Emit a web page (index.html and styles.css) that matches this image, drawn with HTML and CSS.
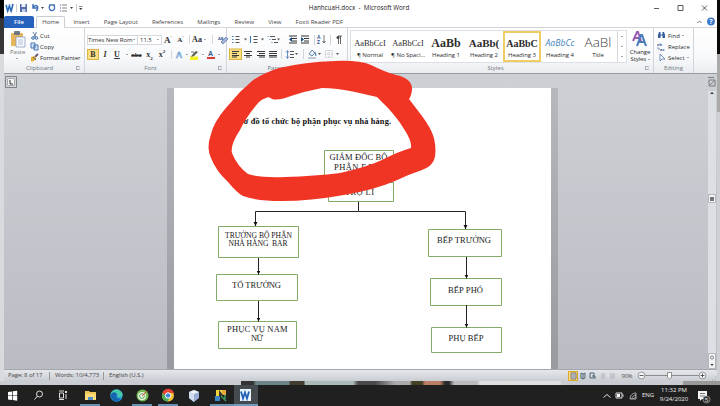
FILE: index.html
```html
<!DOCTYPE html>
<html lang="en">
<head>
<meta charset="utf-8">
<title>HanhcuaH.docx - Microsoft Word</title>
<link rel="stylesheet" href="styles.css">
</head>
<body>
<div class="screen">
<div class="desktop">
<div class="edge"></div>
<main class="window">
  <header class="titlebar">
    <svg class="quick" width="82" height="16" viewBox="4 0 82 16">
      <rect x="6" y="4" width="7" height="8" fill="#dcebfa"/><path d="M6 5l1.700 6 1.700-5 1.700 5 2-7" fill="none" stroke="#2868b8" stroke-width="1.500"/>
      <path d="M16.500 4v8M76.500 4v8" stroke="#aaa" stroke-width=".6"/>
      <rect x="20" y="4" width="7" height="8" fill="#536dab"/><rect x="21.500" y="4" width="4" height="3" fill="#edf2fb"/><rect x="22" y="9" width="3.500" height="3" fill="#c6d0e8"/>
      <path d="M33 4v4h4M33.500 7.500c2-4 6-1.500 3 3.500" fill="none" stroke="#4270b5" stroke-width="1.500"/>
      <path d="M41 7h3l-1.500 2zM70 7h3l-1.500 2zM79 8h3.500l-1.700 2z" fill="#444"/><path d="M79 6.500h3.500" stroke="#555" stroke-width=".7"/>
      <path d="M50 5c-2 3 0 6 2.500 5.500s3-4 .5-5.500h2M49 5h3" fill="none" stroke="#4878bb" stroke-width="1.400"/>
      <path d="M62 5h5M62 8h5M62 11h5" stroke="#666" stroke-width=".8"/><path d="M60 5h1M60 8h1M60 11h1" stroke="#345b95" stroke-width="1.200"/>
    </svg>
    <div class="title">HanhcuaH.docx&nbsp; -&nbsp; Microsoft Word</div>
    <svg class="controls" width="67" height="16" viewBox="650 0 67 16"><path d="M654 8.500h5M678 5.500h5v5h-5zM702 5.500l5 5M707 5.500l-5 5" fill="none" stroke="#333" stroke-width=".8"/></svg>
  </header>
  <nav class="tabs">
    <span class="file">File</span><span class="home">Home</span><span>Insert</span><span>Page Layout</span><span>References</span><span>Mailings</span><span>Review</span><span>View</span><span>Foxit Reader PDF</span>
    <svg class="help" width="22" height="12" viewBox="695 16 22 12"><path d="M697.500 23l2-2 2 2" fill="none" stroke="#777"/><circle cx="711" cy="21.500" r="3.900" fill="#3c78c9"/><text x="711" y="24" text-anchor="middle" class="q">?</text></svg>
  </nav>
  <section class="ribbon">
    <div class="group clipboard">
      <div class="body">
        <div class="paste"><svg width="16" height="19" viewBox="0 0 16 19"><rect x="1" y="3" width="12" height="13" rx="1" fill="#e7b65c"/><rect x="4" y="1" width="6" height="4" rx="1" fill="#717782"/><path d="M6 7h9v10H6z" fill="#f5f8fc" stroke="#8297b5" stroke-width=".7"/><path d="M8 10h5M8 12h5M8 14h5" stroke="#91a3bd" stroke-width=".6"/></svg><span>Paste</span><i class="arrow"></i></div>
        <div class="commands">
          <div><svg width="9" height="9" viewBox="0 0 9 9"><path d="M3 1l3 5M6.500 1L4 6" stroke="#6b7f9e" fill="none"/><circle cx="3" cy="7" r="1.300" fill="none" stroke="#376eb0"/><circle cx="6.500" cy="7" r="1.300" fill="none" stroke="#376eb0"/></svg>Cut</div>
          <div><svg width="9" height="9" viewBox="0 0 9 9"><path d="M1 1h4v5H1zM4 3h4v5H4z" fill="#d5e5fa" stroke="#4976b4"/></svg>Copy</div>
          <div><svg width="9" height="9" viewBox="0 0 9 9"><path d="M5 4l3-3" stroke="#665a7d" stroke-width="2"/><path d="M1 4l4-1 1 3-2 2-3 .5z" fill="#e7af32"/><path d="M3 4l3 3" stroke="#4b5d80"/></svg><span class="painter">Format Painter</span></div>
        </div>
      </div>
      <div class="label">Clipboard<i class="launch"></i></div>
    </div>
    <div class="group font">
      <div class="body">
        <div class="fontrow top">
          <div class="combo"><span>Times New Rom</span><i class="arrow"></i></div><div class="combo size"><span>11.5</span><i class="arrow"></i></div>
          <b class="serif grow">A<sup>ˆ</sup></b><b class="serif shrink">A<sup>ˇ</sup></b><i class="sep"></i><b class="serif aa">Aa</b><i class="arrow"></i><i class="sep"></i>
          <svg width="11" height="10" viewBox="0 0 11 10"><text x="0" y="5" class="mini">AB</text><path d="M3 7l5-5 2 2-5 5z" fill="#a3b5df" stroke="#53719f" stroke-width=".7"/></svg>
        </div>
        <div class="fontrow bottom">
          <b class="serif bold">B</b><b class="serif"><em>I</em></b><b class="serif"><u>U</u></b><i class="arrow"></i><s>abc</s><b class="serif">x<sub>2</sub></b><b class="serif">x<sup>2</sup></b><i class="sep"></i>
          <span class="effect">A</span><i class="arrow"></i>
          <svg width="9" height="10" viewBox="0 0 9 10"><path d="M0 6.500h8V10H0z" fill="#f4ef23"/><path d="M2 5l4-4 2 1-4 4-3 1z" fill="#596347"/><path d="M1 2h3v2" stroke="#777" fill="none"/></svg><i class="arrow"></i><span class="ink">A</span><i class="arrow"></i>
        </div>
      </div>
      <div class="label">Font<i class="launch"></i></div>
    </div>
    <div class="group paragraph">
      <div class="body">
        <svg width="119" height="34" viewBox="229 29 119 34">
          <g stroke="#555" stroke-width="1"><path d="M235.500 36.500h4M235.500 39.500h4M235.500 42.500h4M253.500 36.500h4M253.500 39.500h4M253.500 42.500h4M270 36.500h5M272 39.500h4M274 42.500h4"/><path d="M232 36.500h1.500M232 39.500h1.500M232 42.500h1.500M250.500 36v7M267.500 36.500h1M269.500 39.500h1M271.500 42.500h1" stroke="#3976bb"/></g>
          <path d="M244 38.500h3l-1.500 2zM261 38.500h3l-1.500 2zM277 38.500h3l-1.500 2zM295 53h3l-1.500 2zM318 53h3l-1.500 2zM336 53h3l-1.500 2z" fill="#555"/>
          <path d="M289 36h8M292 38.500h5M292 41h5M289 43h8M301 36h8M304 38.500h5M304 41h5M301 43h8" stroke="#333"/><path d="M292 37v5l-3-2.500zM301 37v5l3-2.500z" fill="#244f87"/>
          <path d="M314.500 35v10M330.500 35v10M281.500 49v10M303.500 49v10" stroke="#d1d5da"/>
          <text x="317" y="39" class="sort">A</text><text x="317" y="44" class="sort">Z</text><path d="M324 35v8M322.500 41l1.500 2 1.500-2" fill="none" stroke="#555" stroke-width=".8"/>
          <path d="M338 36h4M338.500 36v8M340.500 36v8" stroke="#444" stroke-width=".8"/><circle cx="338" cy="37.500" r="1.500" fill="#444"/>
          <rect x="229.500" y="49" width="12" height="10.500" fill="#fce083" stroke="#ddb340"/>
          <path d="M232 51.500h7M232 53.500h5M232 55.500h7M232 57h5M244 51.500h8M246 53.500h4M244 55.500h8M246 57h4M257 51.500h8M259 53.500h6M257 55.500h8M259 57h6M269 51.500h8M269 53.500h8M269 55.500h8M269 57h8" stroke="#393939" stroke-width="1"/>
          <path d="M290 51.500h4M290 54.500h4M290 57.500h4" stroke="#555"/><path d="M287.500 51v7M286 52.500l1.500-2 1.500 2M286 56.500l1.500 2 1.500-2" fill="none" stroke="#4777b2" stroke-width=".8"/>
          <path d="M309 54l3-4 3 3-3 3z" fill="#e9eef7" stroke="#456c9f" stroke-width=".8"/><path d="M308 58h8" stroke="#b0bac6" stroke-width="1.500"/><path d="M315 52l1 4" stroke="#3d74b5"/>
          <path d="M325.500 50.500h7v7h-7zM329 50v8M325 54h8" fill="none" stroke="#a3a9b2" stroke-width=".7" stroke-dasharray="1 1"/>
        </svg>
      </div>
      <div class="label">Paragraph</div>
    </div>
    <div class="group styles">
      <div class="body">
        <div class="gallery">
          <div><b class="sn">AaBbCcI</b><span>¶ Normal</span></div>
          <div><b class="sn">AaBbCcI</b><span>¶ No Spaci...</span></div>
          <div><b class="s1">AaBb</b><span>Heading 1</span></div>
          <div><b class="s2">AaBb(</b><span>Heading 2</span></div>
          <div class="selected"><b class="s3">AaBbC</b><span>Heading 3</span></div>
          <div><b class="s4">AaBbCc</b><span>Heading 4</span></div>
          <div><b class="st">AaBl</b><span>Title</span></div>
          <aside><i class="arrow up"></i><i class="arrow"></i><i class="arrow more"></i></aside>
        </div>
        <div class="change"><svg width="18" height="17" viewBox="0 0 18 17"><path d="M2 10l4-9h1l3 9M4 7h5" fill="none" stroke="#9a59b0" stroke-width="1.900"/><path d="M6 15l4-11h1l4 11M7 11h7" fill="none" stroke="#4a7bbd" stroke-width="2.100"/></svg><span>Change</span><span>Styles <i class="arrow"></i></span></div>
      </div>
      <div class="label">Styles<i class="launch"></i></div>
    </div>
    <div class="group editing">
      <div class="body commands">
        <div><svg width="9" height="9" viewBox="0 0 9 9"><path d="M1 7V4l1-3h1.500v6zM8 7V4L7 1H5.500v6z" fill="#335d9c"/><path d="M3 4h3" stroke="#335d9c"/></svg>Find <i class="arrow"></i></div>
        <div><svg width="9" height="9" viewBox="0 0 9 9"><text x="0" y="4" class="mini">ab</text><text x="3" y="8.500" class="mini">ac</text><path d="M1 5v2h2" fill="none" stroke="#3974b4" stroke-width=".7"/></svg>Replace</div>
        <div><svg width="9" height="9" viewBox="0 0 9 9"><path d="M3 1v7l2-2h3z" fill="#fff" stroke="#6282ad" stroke-width=".9"/></svg>Select <i class="arrow"></i></div>
      </div>
      <div class="label">Editing</div>
    </div>
  </section>
  <section class="workspace">
    <div class="ruler"><svg width="13" height="13" viewBox="0 0 13 13"><path d="M.5.500h11v11H.5z" fill="#d3d6db" stroke="#7e8388"/><path d="M2.500 2.500h7v7h-7z" fill="#f5f6f7" stroke="#a6aaae"/><path d="M5 4v4h3" fill="none" stroke="#333"/></svg></div>
    <div class="shade left"></div>
    <article class="page">
      <svg width="377" height="281" viewBox="174 88 377 281">
        <defs><marker id="tip" markerWidth="6" markerHeight="6" refX="4" refY="2" orient="auto" markerUnits="userSpaceOnUse"><path d="M0 0l4 2-4 2z" fill="#111"/></marker></defs>
        <text class="heading" x="239" y="123.500" textLength="152">Sơ đồ tổ chức bộ phận phục vụ nhà hàng.</text>
        <g class="nodes">
          <path d="M324.500 150.500h69v28h-69zM328.500 182.500h65v19h-65zM218.500 226.500h80v31h-80zM216.500 274.500h81v26h-81zM218.500 321.500h78v27h-78zM428.500 229.500h73v27h-73zM430.500 278.500h71v27h-71zM431.500 327.500h70v25h-70z"/>
        </g>
        <g class="lines"><path d="M358.500 202v9.500"/><path d="M358.500 211.500H255.500V226"/><path d="M358.500 211.500h107V229"/><path d="M258.500 258v16.500"/><path d="M258.500 301v20.500"/><path d="M466.500 257v21.500"/><path d="M466.500 305v22.500"/></g>
        <g class="names">
          <text x="329.500" y="160" textLength="58">GIÁM ĐỐC BỘ</text><text x="334" y="169.500" textLength="40">PHẬN F.B</text><text x="345" y="194.500" textLength="29">TRỢ LÍ</text>
          <text x="225" y="237.500" textLength="67" class="small">TRƯỞNG BỘ PHẬN</text><text x="228.500" y="246" textLength="59" class="small" xml:space="preserve">NHÀ HÀNG  BAR</text>
          <text x="232" y="288" textLength="49">TỔ TRƯỞNG</text>
          <text x="227" y="332" textLength="60.500">PHỤC VỤ NAM</text><text x="251" y="340.500" textLength="12">NỮ</text>
          <text x="437" y="243" textLength="54">BẾP TRƯỞNG</text><text x="448" y="292.500" textLength="35">BẾP PHÓ</text><text x="448.500" y="341" textLength="35">PHỤ BẾP</text>
        </g>
      </svg>
    </article>
    <div class="shade right"></div>
    <svg class="scroll" width="10" height="296" viewBox="707 73 10 296"><path d="M708 90h8v279h-8z" fill="#dce0e5"/><path d="M708 76.500h6M709 79h6v6h-6zM710 84l4-4" fill="none" stroke="#666" stroke-width=".8"/><path d="M710 93l2-2 2 2zM710 358l2 2 2-2zM710 364l2-1 2 1z" fill="#333"/><path d="M708.500 193.500h7v8h-7zM708.500 352.500h7v15h-7z" fill="#f1f3f5" stroke="#9ba0a6" stroke-width=".7"/><path d="M710 196h4v4h-4z" fill="#777"/><circle cx="712" cy="356.500" r="1.500" fill="none" stroke="#555" stroke-width=".7"/><path d="M710.500 363h3l-1.500 2z" fill="#333"/></svg>
  </section>
  <footer class="status">
    <span class="pages">Page: 8 of 17</span><i></i><span class="words">Words: 10/4,773</span><i></i><span class="language">English (U.S.)</span>
    <svg width="155" height="12" viewBox="562 369 155 12"><rect x="568.500" y="370.500" width="9" height="9" fill="#fde086" stroke="#dca827"/><path d="M571 372h5v6h-5z" fill="#ddd" stroke="#555" stroke-width=".8"/><path d="M572 374h3M572 376h3" stroke="#555" stroke-width=".7"/><path d="M581 372v5l2 1 2-1v-5l-2 1zM583 373v5M590 372h4v5h-4zM592 375h3v3" fill="none" stroke="#567" stroke-width="1"/><path d="M601 373h4M601 375h4M601 377h4M610 373h5M610 375h5M610 377h5" stroke="#a2a7ae" stroke-width=".8"/><text x="621.500" y="377" textLength="11" class="zoomtext">90%</text><path d="M645 374.500h54" stroke="#777" stroke-width=".8"/><circle cx="641.500" cy="374.500" r="3.400" fill="#f7f8f9" stroke="#7c8187" stroke-width=".8"/><circle cx="702.500" cy="374.500" r="3.400" fill="#f7f8f9" stroke="#7c8187" stroke-width=".8"/><path d="M639.500 374.500h4M700.500 374.500h4M702.500 372.500v4" stroke="#333" stroke-width=".8"/><path d="M667.500 371.500h4v5l-2 1.500-2-1.500z" fill="#fff" stroke="#777" stroke-width=".8"/><path d="M712 379h1M715 379h1M715 376h1" stroke="#9ba1a8"/></svg>
  </footer>
</main>
<div class="edge rightedge"></div>
</div>
<div class="wallpaper"></div>
<footer class="taskbar">
  <svg width="258" height="21" viewBox="0 385 258 21">
    <path d="M8 392l4-.6v4H8zM12.700 391.300l4.500-.6v4.700h-4.500zM8 396h4v4l-4-.6zM12.700 396h4.500v4.700l-4.500-.6z" fill="#fff"/>
    <circle cx="39.500" cy="394" r="3" fill="none" stroke="#ddd"/><path d="M37.500 396l-3 3.500" stroke="#ddd"/>
    <path d="M59.500 393h4v5h-4zM59 391h5M59 399.500h5M66 394v5" fill="none" stroke="#ddd"/><path d="M65 391h2v2h-2z" fill="#ddd"/>
    <path d="M85 391h4l1 1h6v8H85z" fill="#f1c758"/><path d="M85 394h11v6H85z" fill="#ffda78"/><path d="M88 397h5v3h-5z" fill="#4b91c8"/>
    <circle cx="116.500" cy="395.500" r="6.200" fill="#249bd6"/><path d="M110.500 394c2-6 10-6 12 0 .5 3-3 4-5 2.500 1-4-4-4.500-5 0z" fill="#48cba8"/><path d="M111 395c0-3 5-4 6-.5-2 3 1 5 4 4-3 5-10 3-10-3.500z" fill="#1764b0"/>
    <circle cx="142.500" cy="395.500" r="6" fill="#72ba55"/><circle cx="142" cy="396" r="4" fill="#f3f9ed"/><circle cx="142" cy="396" r="2.400" fill="none" stroke="#52a347"/><path d="M142 396l5-5" stroke="#e74b39"/>
    <circle cx="168" cy="395.500" r="6" fill="#f5c438"/><path d="M162.500 393c2-6 10-5 11.500 0h-6l-1 5z" fill="#e64537"/><path d="M162.500 393c-1.500 5 1 8 5 8.500l3-5h-4z" fill="#4bac54"/><circle cx="168" cy="395.500" r="2.700" fill="#4385df" stroke="#fff"/>
    <path d="M189 392l5-2 5 2v6l-5 4-5-4z" fill="#9caed7"/><path d="M189 392l5 2v8l-5-4z" fill="#d5def0"/><path d="M189 392l5-2 5 2-5 2z" fill="#eef3fa"/>
    <path d="M216 390h6v6h-6z" fill="#f5d33d"/><path d="M222 390h4v5h-4z" fill="#e8aa38"/><path d="M215 396h5v5h-5z" fill="#3a88c9"/><path d="M221 396l5 5M225 395v4" stroke="#3c9b61" stroke-width="1.500"/><path d="M219 390l4 5-4 2z" fill="#333"/>
    <path d="M234 385h24v21h-24z" fill="#454a4e"/><path d="M240 389h11v12h-11z" fill="#e9f3fd"/><path d="M241 391.500l2 7 2-6 2 6 2-7" fill="none" stroke="#2360b6" stroke-width="1.800"/>
    <path d="M80 405h20M132 405h20M158 405h20M210 405h48" stroke="#7cb5df" stroke-width="1.300"/>
  </svg>
  <div class="tray"><svg width="42" height="21" viewBox="600 385 42 21"><path d="M603.500 397.500l3.500-3 3.500 3" fill="none" stroke="#ddd"/><path d="M616 393h6v5h-6zM623 394.500v2" fill="none" stroke="#ddd"/><path d="M617 394h3v3h-3z" fill="#fff"/><path d="M630 399c0-3 2-6 6-6M632 399c0-2 1.500-4 4-4M634 399c0-1 1-2 2-2M636 393v6h-6" fill="none" stroke="#ccc" stroke-width=".8"/></svg><span class="eng">ENG</span><div class="clock"><span>11:32 PM</span><span>9/24/2020</span></div><svg width="22" height="21" viewBox="696 385 22 21"><path d="M698 391h9v8h-5l-2 2v-2h-2z" fill="#f3f3f3"/><path d="M700 393.500h5M700 396h5" stroke="#555" stroke-width=".8"/><circle cx="706.500" cy="399.500" r="3.500" fill="#333" stroke="#aaa" stroke-width=".7"/><text x="706.500" y="402" text-anchor="middle" class="badge">5</text></svg></div>
</footer>
<svg class="markup" width="720" height="406" viewBox="0 0 720 406"><path fill-rule="evenodd" fill="#f13525" d="M240 92L252 81Q263 73 279 68Q305 62 335 61Q359 60 371 65Q385 72 396 75Q411 78 412 88Q412 95 409 99L422 116Q431 128 434 138Q437 152 434 160Q431 167 422 170Q407 175 395 181Q374 190 344 195Q310 201 282 201Q256 201 243 196Q237 193 228 182Q216 171 211 158Q206 148 211 134Q214 122 225 109ZM259 102Q246 117 240 130Q230 145 232 153Q237 166 248 174Q260 178 285 177Q315 176 340 173Q367 167 382 160Q397 152 411 148Q412 141 404 129Q398 119 388 108L377 97L355 92Q336 88 322 88Q306 91 291 96Q278 101 272 99Q269 96 266 98Q262 99 259 102Z"/></svg>
</div>
</body>
</html>
```
FILE: styles.css
```css
*{box-sizing:border-box}
body{margin:0;overflow:hidden;background:#202020;color:#2d2d2d;font:6px/8px "Open Sans","Noto Sans",sans-serif}
svg{display:block;flex:none}
.screen{position:relative;width:720px;height:406px;display:flex;flex-direction:column}
.desktop{height:381px;display:flex}
.edge{width:4px;background:linear-gradient(#050505 18px,#363636 18px 54px,#d9dadd 54px)}
.rightedge{width:3px;background:linear-gradient(#080808 54px,#aaa 54px 112px,#cfd0d3 112px)}
.window{width:713px;background:#fff;display:flex;flex-direction:column}
.titlebar{height:16px;display:flex}
.title{flex:1;text-align:center;line-height:16px;padding-right:3px;color:#222;font-size:6.300px;letter-spacing:0}
.controls{margin-left:15px}
.tabs{height:12px;display:flex;line-height:12px;letter-spacing:0;border-bottom:1px solid #d1d5da;color:#444;gap:14.200px;white-space:nowrap}
.file{width:30px;background:#2462bd;color:#fff;text-align:center;border-radius:2px 2px 0 0;height:12px;font-weight:600}
.home{width:29px;height:12px;text-align:center;background:#fff;border:1px solid #c9ced4;border-bottom:0;border-radius:2px 2px 0 0;margin:0 -6px 0 -12px;line-height:11px}
.help{margin-left:auto}
.q{font:bold 7px "Open Sans",sans-serif;fill:#fff}
.ribbon{height:46px;display:flex;background:linear-gradient(#fff,#f8f9fb 65%,#e9ecf0);border-bottom:1px solid #979ba1}
.group{display:flex;flex-direction:column;border-right:1px solid #d2d6dc;height:45px}
.group>.body{height:35px;display:flex}
.label{height:10px;line-height:10px;text-align:center;color:#707780;position:relative}
.clipboard{width:81px}.font{width:142px}.paragraph{width:121px}.styles{width:306px}.editing{width:40px}
.clipboard .label{padding-right:9px}.font .label{padding-right:10px}.paragraph .label{padding-right:10px}.styles .label{padding-right:10px}
.arrow{display:inline-block;width:0;height:0;border:1.500px solid transparent;border-top-color:#555;border-bottom:0;vertical-align:middle}
.launch{position:absolute;right:4px;top:3px;width:4px;height:4px;border:1px solid #a7adb5;border-right-color:#d7dade}
.paste{width:26px;padding:2px 0 0 6px;display:flex;flex-direction:column;color:#777}
.paste span{margin-top:-1px;height:9px;line-height:9px}.paste .arrow{margin:1px 0 0 6px}
.commands{display:flex;flex-direction:column;padding-top:2px;white-space:nowrap}
.commands>div{display:flex;align-items:center;height:11.300px;gap:2px}
.clipboard .commands>div{gap:1px}
.painter{letter-spacing:-.1px}
.font .body{flex-direction:column}
.fontrow{display:grid;align-items:center;justify-items:center;height:15px;padding-left:2px}
.top{grid-template-columns:51px 24px 12px 13px 5px 10px 5px 10px 12px;margin-top:4px}
.bottom{grid-template-columns:12px 12px 12px 7px 13px 13px 12px 6px 10px 5px 11px 5px 11px 5px}
.combo{width:100%;height:10px;border:1px solid #d5d8dd;display:flex;align-items:center;justify-content:space-between;padding:0 2px 0 0;background:#fff;line-height:8px;white-space:nowrap;letter-spacing:-.05px}
.size{padding-left:2px;border-left:0}
.serif{font:bold 8px/10px "Liberation Serif",serif;color:#333;white-space:nowrap}
.serif sup,.serif sub{font-size:5px;line-height:0}
.grow{font-size:9px}.shrink{font-size:7px}
.bold{background:#fce083;border:1px solid #dcb344;width:12px;height:11px;text-align:center;line-height:9px}
.sep{height:9px;width:1px;background:#d5d8dd}
.bottom s{font:bold 6px/8px "Liberation Sans",sans-serif}
.mini{font:bold 4px "Open Sans",sans-serif;fill:#456294}
.sort{font:bold 5px "Open Sans",sans-serif;fill:#425f94}
.effect{font:bold 9px/10px "Liberation Sans",sans-serif;color:#dceeff;-webkit-text-stroke:.6px #689ccc}
.ink{font:bold 7px/7px "Liberation Sans",sans-serif;color:#325a92;width:8px;text-align:center;border-bottom:2px solid #df3b35}
.paragraph .body{padding-left:2px;padding-top:1px}
.gallery{width:277px;height:33px;margin:2px 0 0 2px;border:1px solid #dce0e5;background:#fff;display:grid;grid-template-columns:repeat(7,38px) 9px}
.gallery>div{display:flex;flex-direction:column;align-items:center;justify-content:flex-end;overflow:hidden;white-space:nowrap;padding-bottom:2px}
.gallery b{height:15px;line-height:15px}.gallery span{height:9px;line-height:9px;letter-spacing:-.05px}
.gallery .sn{font:8.400px/15px "Liberation Serif",serif}.gallery .s1{font:bold 12px/15px "Liberation Serif",serif}.gallery .s2{font:bold 11px/15px "Liberation Serif",serif}.gallery .s3{font:bold 10px/15px "Liberation Serif",serif}.gallery .s4{font:italic 8.700px/15px "Open Sans",sans-serif;color:#4584bd}.gallery .st{font:300 13.500px/13px "Open Sans",sans-serif;color:#444}
.gallery .selected{border:2px solid #efcd63;padding-bottom:0}
.gallery aside{border-left:1px solid #d5d9df;display:flex;flex-direction:column;align-items:center;justify-content:space-around}.up{transform:rotate(180deg)}
.change{width:26px;display:flex;flex-direction:column;align-items:center;padding-top:2px;white-space:nowrap}.change span{line-height:7px;letter-spacing:-.1px}.change svg{height:19px}
.editing .commands{padding-left:3px}
.workspace{height:295px;display:flex;background:linear-gradient(#cdd1d6,#b9bdc3)}
.ruler{width:163px;padding:2px 0 0 1px}
.shade{width:7px;margin-top:14px;background:linear-gradient(#b5b8bd,#979b9f)}
.page{width:377px;height:281px;margin-top:14px;background:#fff}
.scroll{margin-left:auto}
.heading{font:bold 8.300px "Liberation Serif",serif;fill:#111}
.nodes{fill:#fff;stroke:#83ac68;stroke-width:1}.lines{fill:none;stroke:#222;stroke-width:1}.lines path:not(:first-child){marker-end:url(#tip)}
.names{font:8.500px "Liberation Serif",serif;fill:#202020}.small{font-size:7.600px}
.status{height:12px;display:flex;align-items:center;background:linear-gradient(#e5e7ea,#c9cdd3);border-top:1px solid #a3a7ad;white-space:nowrap;color:#444}
.status span{line-height:11px;letter-spacing:-.1px}.status i{width:1px;height:8px;background:#999;margin:0 5px}.pages{width:36px;margin-left:4px}.words{width:43px}.status svg{margin-left:auto}
.zoomtext{font:6px "Open Sans",sans-serif;fill:#555}
.wallpaper{height:4px;background:linear-gradient(90deg,#c9ccd2 241px,#333 241px 253px,#6b8587 256px 289px,#433c31 290px 304px,#abb9b8 305px 353px,#494949 358px 375px,#aaa 395px 410px,#444226 412px 422px,#bb7e66 425px 440px,#292929 445px 449px,#bbb 454px 477px,#dedede 480px 560px,#c9ccd2 562px 682px,#999 684px)}
.taskbar{height:21px;background:#202020;display:flex;justify-content:space-between;color:#eee}
.tray{display:flex;width:120px}.eng{width:14px;line-height:21px}.clock{width:40px;display:flex;flex-direction:column;align-items:center;padding-top:1px;padding-right:4px}.clock span{line-height:9px;white-space:nowrap}.badge{font:6px "Open Sans",sans-serif;fill:#eee}
.markup{position:absolute;left:0;top:0;pointer-events:none}
```
